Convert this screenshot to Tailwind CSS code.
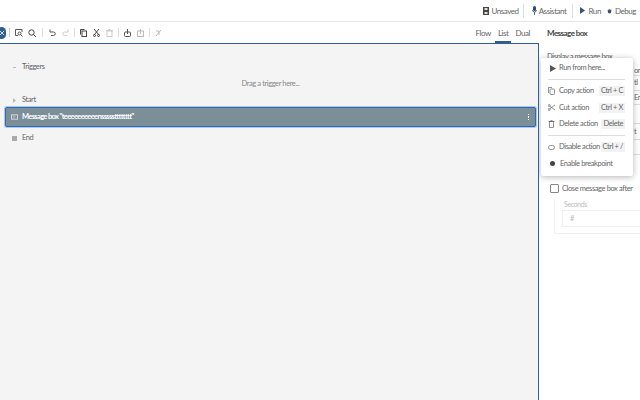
<!DOCTYPE html>
<html lang="en">
<head>
    <meta charset="UTF-8">
    <title>Message box</title>
    <script src="https://cdn.jsdelivr.net/npm/@tailwindcss/browser@4"></script>
</head>
<body class="w-[640px] h-[400px] overflow-hidden bg-white text-[#666] font-['Lato',sans-serif] text-[7.5px] tracking-[-0.4px]">

    <!-- top bar -->
    <div class="h-[22px] border-b border-[#e6e6e6] flex items-center justify-end pr-[4px] text-[8px] tracking-[-0.45px] text-[#666]">
        <div class="flex items-center gap-[3px]">
            <svg class="w-[6px] h-[8px]" viewBox="0 0 6 8"><path d="M0 0h6v8H0z" fill="#444"/><path d="M1.500 1h3v2h-3zM1.500 5h3v2h-3z" fill="#ddd"/></svg>
            <span>Unsaved</span>
        </div>
        <div class="w-px h-[14px] bg-[#ddd] ml-[4px] mr-[5px]"></div>
        <div class="flex items-center gap-[2px] ml-[3px]">
            <svg class="w-[5px] h-[9px]" viewBox="0 0 5 9"><rect x="1" y="0" width="3" height="5" rx="1.500" fill="#2f4b7c"/><path d="M.5 4a2 2 0 0 0 4 0M2.500 6v3" stroke="#2f4b7c" fill="none" stroke-width=".8"/></svg>
            <span>Assistant</span>
        </div>
        <div class="w-px h-[14px] bg-[#ddd] ml-[6px] mr-[4px]"></div>
        <div class="flex items-center gap-[3px] ml-[3px]">
            <svg class="w-[5px] h-[7px]" viewBox="0 0 5 7"><path d="M0 0l5 3.500-5 3.500z" fill="#3a5378"/></svg>
            <span>Run</span>
        </div>
        <div class="flex items-center gap-[3px] ml-[6px]">
            <svg class="w-[5px] h-[6px]" viewBox="0 0 6 7"><ellipse cx="3" cy="4" rx="2" ry="2.500" fill="#2f4b7c"/><path d="M0 2l1 1M6 2L5 3" stroke="#2f4b7c" stroke-width=".7"/></svg>
            <span>Debug</span>
        </div>
    </div>

    <div class="flex h-[378px]">
        <!-- main column -->
        <div class="w-[539px] shrink-0 flex flex-col">
            <!-- toolbar -->
            <div class="h-[21px] flex items-center justify-between pr-[9px]">
                <div class="flex items-center -ml-[3px]">
                    <div class="w-[9px] h-[12px] rounded-full bg-[#2f5f8f] mr-[3px] flex items-center justify-center">
                        <svg class="w-[4px] h-[4px]" viewBox="0 0 5 5"><path d="M0 0l5 5M5 0L0 5" stroke="#fff"/></svg>
                    </div>
                    <div class="w-px h-[9px] bg-[#ccc] mr-[5px]"></div>
                    <svg class="w-[8px] h-[8px] mr-[5px]" viewBox="0 0 8 8" fill="none" stroke="#555"><path d="M7 3V.5H.5v6H3"/><circle cx="4.500" cy="4.500" r="1.500"/><path d="M5.500 5.500L7.500 7.500"/></svg>
                    <svg class="w-[8px] h-[8px] mr-[6px]" viewBox="0 0 8 8" fill="none" stroke="#444"><circle cx="3.500" cy="3.500" r="2.700"/><path d="M5.500 5.500L8 8"/></svg>
                    <div class="w-px h-[9px] bg-[#ddd] mr-[6px]"></div>
                    <svg class="w-[7px] h-[7px] mr-[6px]" viewBox="0 0 7 7" fill="none" stroke="#555"><path d="M1 .5v2.500h3.500a1.700 1.700 0 0 1 0 3.500H2"/></svg>
                    <svg class="w-[7px] h-[7px] mr-[5px]" viewBox="0 0 7 7" fill="none" stroke="#ccc"><path d="M6 .5v2.500H2.500a1.700 1.700 0 0 0 0 3.500H5"/></svg>
                    <div class="w-px h-[9px] bg-[#ddd] mr-[5px]"></div>
                    <svg class="w-[7px] h-[8px] mr-[6px]" viewBox="0 0 7 8" fill="none" stroke="#444"><path d="M.5.500h4M.5.500v5"/><rect x="2" y="2" width="4.500" height="5.500"/></svg>
                    <svg class="w-[7px] h-[8px] mr-[6px]" viewBox="0 0 7 8" fill="none" stroke="#444"><path d="M1 0l5 6M6 0L1 6"/><circle cx="1.500" cy="6.500" r="1"/><circle cx="5.500" cy="6.500" r="1"/></svg>
                    <svg class="w-[7px] h-[8px] mr-[5px]" viewBox="0 0 7 8" fill="none" stroke="#ccc"><rect x="1" y="2" width="5" height="5.500"/><path d="M0 1.500h7M2.500.500h2"/></svg>
                    <div class="w-px h-[9px] bg-[#ddd] mr-[5px]"></div>
                    <svg class="w-[7px] h-[8px] mr-[6px]" viewBox="0 0 7 8" fill="none" stroke="#555"><rect x=".5" y="3" width="6" height="4.500" rx="1"/><path d="M3.500 0v5"/></svg>
                    <svg class="w-[7px] h-[8px] mr-[5px]" viewBox="0 0 7 8" fill="none" stroke="#bbb"><rect x=".5" y="2" width="6" height="5.500"/><path d="M3.500 0v5"/></svg>
                    <div class="w-px h-[9px] bg-[#ddd] mr-[5px]"></div>
                    <svg class="w-[7px] h-[8px]" viewBox="0 0 7 8" fill="none" stroke="#bbb"><path d="M1 7l5-6M1 2h3v4"/></svg>
                </div>
                <div class="flex h-full text-[8px] tracking-[-0.45px] text-[#666]">
                    <span class="leading-[23px] mr-[4px]">Flow</span>
                    <span class="px-[3px] leading-[23px] border-b-2 border-[#2f5f8f]">List</span>
                    <span class="leading-[23px] ml-[4px]">Dual</span>
                </div>
            </div>

            <!-- canvas -->
            <div class="flex-1 bg-[#f4f4f4] border-t-[1.5px] border-r-[1.5px] border-[#2f5f9f] pt-[17px] pl-[5px] pr-[2px]">
                <div class="flex items-center gap-[6px] h-[12px] pl-[8px]">
                    <span class="w-[3px] h-[1px] bg-[#bbb]"></span>
                    <span>Triggers</span>
                </div>
                <div class="text-center text-[#888] h-[12px] leading-[12px] mt-[5px]">Drag a trigger here...</div>
                <div class="flex items-center gap-[6px] h-[12px] pl-[8px] mt-[4px]">
                    <svg class="w-[3px] h-[5px]" viewBox="0 0 3 5"><path d="M0 0l3 2.500-3 2.500z" fill="#bbb"/></svg>
                    <span>Start</span>
                </div>
                <div class="h-[20px] mt-[1px] bg-[#7c8f99] border-[1.5px] border-[#2f6bb5] rounded-[2px] shadow-[0_0_0_1px_#a9c8ee] flex items-center justify-between pl-[5px] pr-[6px] text-white font-bold">
                    <div class="flex items-center gap-[4px]">
                        <svg class="w-[7px] h-[6px]" viewBox="0 0 8 6"><rect x=".5" y=".5" width="7" height="5" fill="none" stroke="#ddd"/><path d="M2 2h3M2 4h2" stroke="#ddd" stroke-width=".7"/></svg>
                        <span class="tracking-[-0.65px]">Message box "teeeeeeeeeenssssstttttttt"</span>
                    </div>
                    <div class="flex flex-col gap-[1px]">
                        <span class="w-[1.5px] h-[1.5px] bg-white"></span>
                        <span class="w-[1.5px] h-[1.5px] bg-white"></span>
                        <span class="w-[1.5px] h-[1.5px] bg-white"></span>
                    </div>
                </div>
                <div class="flex items-center gap-[5px] h-[12px] pl-[7px] mt-[5px]">
                    <span class="w-[5px] h-[5px] bg-[#aaa]"></span>
                    <span>End</span>
                </div>
            </div>
        </div>

        <!-- side panel -->
        <div class="relative flex-1 overflow-hidden pl-[8px] pt-[5px] text-[#666]">
            <div class="text-[8px] font-bold tracking-[-0.55px] text-[#444] leading-[12px]">Message box</div>
            <div class="mt-[13px] leading-[10px] whitespace-nowrap">Display a message box</div>

            <!-- form fields, mostly under the menu -->
            <div class="h-[121px] pt-[4px] pl-[87px] w-[200px]">
                <div class="h-[10px] leading-[10px] border-b border-[#ddd]">on</div>
                <div class="h-[15px] leading-[14px] border-b border-[#ddd]">tl</div>
                <div class="h-[14px] leading-[14px] border-b border-[#ddd]">En</div>
                <div class="h-[19px] border-b border-[#ddd]"></div>
                <div class="h-[16px] leading-[15px] border-b border-[#ddd]">t</div>
                <div class="h-[15px] border-b border-[#ddd]"></div>
            </div>

            <div class="flex items-center gap-[3px] pl-[3px] whitespace-nowrap">
                <span class="w-[9px] h-[9px] border border-[#888] rounded-[1px] bg-white"></span>
                <span>Close message box after</span>
            </div>
            <div class="ml-[7px] mt-[5px] pl-[7px] pt-[1px] border-l border-b border-[#f0f0f0] h-[35px] w-[140px]">
                <div class="pl-[2px] text-[7px] text-[#bbb] leading-[8px]">Seconds</div>
                <div class="mt-[2px] h-[17px] border border-[#eee] pl-[7px] text-[#bbb] leading-[15px]">#</div>
            </div>

            <!-- context menu -->
            <div class="absolute left-[2px] top-[36px] w-[92px] h-[118px] bg-white rounded-[2px] shadow-[0_1px_6px_rgba(0,0,0,0.3)] pl-[7px] pr-[8px] pt-[4px]">
                <div class="flex items-center gap-[3px] h-[12px] pl-[2px]">
                    <svg class="w-[6px] h-[7px]" viewBox="0 0 6 7"><path d="M0 0l6 3.500-6 3.500z" fill="#555"/></svg>
                    <span class="whitespace-nowrap">Run from here...</span>
                </div>
                <div class="h-px bg-[#ddd] mt-[5px] mb-[4px]"></div>
                <div class="flex items-center justify-between h-[14px] whitespace-nowrap">
                    <span class="flex items-center gap-[4px]">
                        <svg class="w-[7px] h-[8px]" viewBox="0 0 7 8" fill="none" stroke="#666" stroke-width=".7"><rect x="2" y="2" width="4.500" height="5.500" rx="1"/><path d="M.5 6V.5H4"/></svg>
                        Copy action
                    </span>
                    <span class="bg-[#f2f2f2] px-[2px] text-[7.5px] leading-[10px]">Ctrl + C</span>
                </div>
                <div class="flex items-center justify-between h-[14px] mt-[2.5px] whitespace-nowrap">
                    <span class="flex items-center gap-[4px]">
                        <svg class="w-[7px] h-[7px]" viewBox="0 0 7 7" fill="none" stroke="#666" stroke-width=".7"><path d="M7 1L1.500 5M7 6L1.500 2"/><circle cx="1.200" cy="1.500" r="1"/><circle cx="1.200" cy="5.500" r="1"/></svg>
                        Cut action
                    </span>
                    <span class="bg-[#f2f2f2] px-[2px] text-[7.5px] leading-[10px]">Ctrl + X</span>
                </div>
                <div class="flex items-center justify-between h-[14px] mt-[2.5px] whitespace-nowrap">
                    <span class="flex items-center gap-[4px]">
                        <svg class="w-[7px] h-[8px]" viewBox="0 0 7 8" fill="none" stroke="#666" stroke-width=".7"><rect x="1.500" y="1.500" width="4" height="6"/><path d="M.5 1.500h6M2.500.500h2"/></svg>
                        Delete action
                    </span>
                    <span class="bg-[#f2f2f2] px-[2px] text-[7.5px] leading-[10px]">Delete</span>
                </div>
                <div class="h-px bg-[#ddd] mt-[4px] mb-[4px]"></div>
                <div class="flex items-center justify-between h-[14px] whitespace-nowrap">
                    <span class="flex items-center gap-[4px]">
                        <svg class="w-[7px] h-[5px]" viewBox="0 0 7 5" fill="none" stroke="#666" stroke-width=".7"><rect x=".5" y=".5" width="6" height="4" rx="2"/></svg>
                        Disable action
                    </span>
                    <span class="bg-[#f2f2f2] px-[2px] text-[7.5px] leading-[10px]">Ctrl + /</span>
                </div>
                <div class="flex items-center gap-[5px] h-[14px] mt-[2.5px] pl-[2px] whitespace-nowrap">
                    <span class="w-[5px] h-[5px] bg-[#444] rounded-full"></span>
                    <span>Enable breakpoint</span>
                </div>
            </div>
        </div>
    </div>
</body>
</html>
